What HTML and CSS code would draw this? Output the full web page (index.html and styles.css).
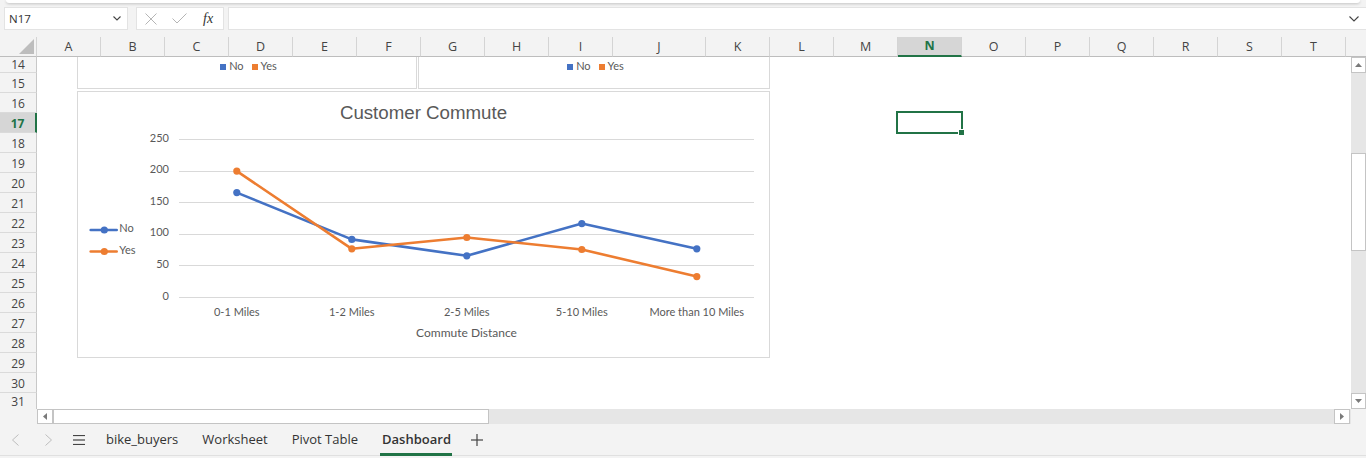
FILE: index.html
```html
<!DOCTYPE html>
<html>
<head>
<meta charset="utf-8">
<title>Dashboard</title>
<link rel="stylesheet" href="styles.css">
</head>
<body>
<div class="top">
  <div class="ribbon-edge"></div>
  <div class="fbar">
    <div class="namebox"><span>N17</span>
      <svg class="chev" width="8" height="5" viewBox="0 0 8 5"><polyline points="0.5,0.5 4,4 7.5,0.5"/></svg>
    </div>
    <div class="fbtns">
      <svg class="ico-x" width="12" height="12" viewBox="0 0 12 12"><line x1="0.5" y1="0.5" x2="11.5" y2="11.5"/><line x1="11.5" y1="0.5" x2="0.5" y2="11.5"/></svg>
      <svg class="ico-ok" width="15" height="11" viewBox="0 0 15 11"><polyline points="0.5,5.5 5,10 14.5,0.5"/></svg>
      <span class="fx">fx</span>
    </div>
    <div class="finput">
      <svg class="chev" width="10" height="6" viewBox="0 0 10 6"><polyline points="0.5,0.5 5,5 9.5,0.5"/></svg>
    </div>
  </div>
</div>

<div class="sheet">
  <div class="corner"><svg width="15" height="15" viewBox="0 0 15 15"><polygon points="15,0 15,15 0,15"/></svg></div>
  <div class="colheads">
    <div class="ch">A</div><div class="ch">B</div><div class="ch">C</div><div class="ch">D</div><div class="ch">E</div><div class="ch">F</div><div class="ch">G</div><div class="ch">H</div><div class="ch">I</div><div class="ch wide">J</div><div class="ch">K</div><div class="ch">L</div><div class="ch">M</div><div class="ch active">N</div><div class="ch">O</div><div class="ch">P</div><div class="ch">Q</div><div class="ch">R</div><div class="ch">S</div><div class="ch">T</div><div class="ch fill"></div>
  </div>

  <div class="rowheads">
    <div class="rh first">14</div><div class="rh">15</div><div class="rh">16</div><div class="rh active">17</div><div class="rh">18</div><div class="rh">19</div><div class="rh">20</div><div class="rh">21</div><div class="rh">22</div><div class="rh">23</div><div class="rh">24</div><div class="rh">25</div><div class="rh">26</div><div class="rh">27</div><div class="rh">28</div><div class="rh">29</div><div class="rh">30</div><div class="rh last">31</div>
  </div>

  <div class="cells">
    <div class="chart mini mini-left">
      <div class="legend">
        <span class="sw no"></span><span class="lt">No</span>
        <span class="sw yes"></span><span class="lt">Yes</span>
      </div>
    </div>
    <div class="chart mini mini-right">
      <div class="legend">
        <span class="sw no"></span><span class="lt">No</span>
        <span class="sw yes"></span><span class="lt">Yes</span>
      </div>
    </div>

    <div class="chart main">
      <svg class="plot" width="691" height="265" viewBox="0 0 691 265">
        <text class="title" x="345.5" y="26.5" text-anchor="middle">Customer Commute</text>
        <g class="grid">
          <line x1="101" x2="676" y1="47.5" y2="47.5"/>
          <line x1="101" x2="676" y1="79.5" y2="79.5"/>
          <line x1="101" x2="676" y1="110.5" y2="110.5"/>
          <line x1="101" x2="676" y1="142.5" y2="142.5"/>
          <line x1="101" x2="676" y1="173.5" y2="173.5"/>
          <line x1="101" x2="676" y1="205.5" y2="205.5"/>
        </g>
        <g class="lab" text-anchor="end">
          <text x="91" y="49.5">250</text>
          <text x="91" y="81">200</text>
          <text x="91" y="112.5">150</text>
          <text x="91" y="144">100</text>
          <text x="91" y="175.5">50</text>
          <text x="91" y="207.5">0</text>
        </g>
        <g class="lab" text-anchor="middle">
          <text x="158.8" y="223.5">0-1 Miles</text>
          <text x="273.8" y="223.5">1-2 Miles</text>
          <text x="388.8" y="223.5">2-5 Miles</text>
          <text x="503.8" y="223.5">5-10 Miles</text>
          <text x="618.8" y="223.5">More than 10 Miles</text>
        </g>
        <text class="axtitle" x="388.5" y="244.5" text-anchor="middle">Commute Distance</text>

        <polyline class="s-no" points="158.8,100.6 273.8,147.4 388.8,163.8 503.8,131.6 618.8,156.8"/>
        <g class="m-no">
          <circle cx="158.8" cy="100.6" r="3.6"/><circle cx="273.8" cy="147.4" r="3.6"/><circle cx="388.8" cy="163.8" r="3.6"/><circle cx="503.8" cy="131.6" r="3.6"/><circle cx="618.8" cy="156.8" r="3.6"/>
        </g>
        <polyline class="s-yes" points="158.8,79.1 273.8,156.8 388.8,145.5 503.8,157.5 618.8,184.6"/>
        <g class="m-yes">
          <circle cx="158.8" cy="79.1" r="3.6"/><circle cx="273.8" cy="156.8" r="3.6"/><circle cx="388.8" cy="145.5" r="3.6"/><circle cx="503.8" cy="157.5" r="3.6"/><circle cx="618.8" cy="184.6" r="3.6"/>
        </g>

        <line class="s-no" x1="12.7" x2="38.7" y1="138" y2="138"/>
        <circle class="m-no" cx="26.3" cy="138" r="3.6"/>
        <text class="lab" x="41.3" y="139.5">No</text>
        <line class="s-yes" x1="12.7" x2="38.7" y1="159.5" y2="159.5"/>
        <circle class="m-yes" cx="26.3" cy="159.5" r="3.6"/>
        <text class="lab" x="41.3" y="161.5">Yes</text>
      </svg>
    </div>

    <div class="selection"><span class="handle"></span></div>
  </div>

  <div class="vscroll">
    <div class="sbtn"><svg width="7" height="4" viewBox="0 0 7 4"><polygon points="3.5,0 7,4 0,4"/></svg></div>
    <div class="vgap"></div>
    <div class="vthumb"></div>
    <div class="vrest"></div>
    <div class="sbtn"><svg width="7" height="4" viewBox="0 0 7 4"><polygon points="0,0 7,0 3.5,4"/></svg></div>
  </div>

  <div class="hcorner"></div>
  <div class="hscroll">
    <div class="sbtn"><svg width="4" height="7" viewBox="0 0 4 7"><polygon points="4,0 4,7 0,3.5"/></svg></div>
    <div class="hthumb"></div>
    <div class="hrest"></div>
    <div class="sbtn"><svg width="4" height="7" viewBox="0 0 4 7"><polygon points="0,0 4,3.5 0,7"/></svg></div>
  </div>
  <div class="hcorner2"></div>
</div>

<div class="tabs">
  <svg class="nav" width="7" height="12" viewBox="0 0 7 12"><polyline points="6.5,0.5 0.5,6 6.5,11.5"/></svg>
  <svg class="nav nav2" width="7" height="12" viewBox="0 0 7 12"><polyline points="0.5,0.5 6.5,6 0.5,11.5"/></svg>
  <svg class="menu" width="12" height="10" viewBox="0 0 12 10"><line x1="0" x2="12" y1="0.5" y2="0.5"/><line x1="0" x2="12" y1="5" y2="5"/><line x1="0" x2="12" y1="9.5" y2="9.5"/></svg>
  <div class="tab first">bike_buyers</div>
  <div class="tab">Worksheet</div>
  <div class="tab">Pivot Table</div>
  <div class="tab active">Dashboard</div>
  <svg class="plus" width="12" height="12" viewBox="0 0 12 12"><line x1="6" x2="6" y1="0" y2="12"/><line x1="0" x2="12" y1="6" y2="6"/></svg>
</div>
</body>
</html>
```

FILE: styles.css
```css
* { box-sizing: border-box; }
html, body { margin: 0; padding: 0; }
body {
  width: 1366px;
  height: 458px;
  overflow: hidden;
  background: #f3f3f3;
  font-family: "Open Sans", "Noto Sans", sans-serif;
  color: #444;
}

/* ---------- top / formula bar ---------- */
.top { height: 37px; display: flex; flex-direction: column; }
.ribbon-edge {
  height: 3px;
  margin: 0 6px;
  background: #fff;
  border-radius: 0 0 7px 7px;
  box-shadow: 0 1px 3px rgba(0,0,0,0.2);
}
.fbar { display: flex; height: 23px; margin-top: 4px; padding-left: 4px; }
.namebox {
  width: 124px;
  background: #fff;
  border: 1px solid #e3e3e3;
  display: flex;
  align-items: center;
  justify-content: space-between;
  padding: 0 6px 0 4px;
  font-size: 11.5px;
  color: #333;
}
.chev polyline { fill: none; stroke: #444; stroke-width: 1.1; }
.fbtns {
  width: 88px;
  margin-left: 8px;
  background: #fff;
  border: 1px solid #e3e3e3;
  display: flex;
  align-items: center;
  padding-left: 8px;
}
.ico-x line, .ico-ok polyline { fill: none; stroke: #b5b5b5; stroke-width: 1; }
.ico-ok { margin-left: 15px; }
.fx {
  margin-left: 16px;
  font-family: "Liberation Serif", "DejaVu Serif", serif;
  font-style: italic;
  font-size: 14px;
  color: #333;
  line-height: 1;
}
.finput {
  flex: 1;
  margin-left: 4px;
  background: #fff;
  border: 1px solid #e3e3e3;
  border-right: none;
  display: flex;
  justify-content: flex-end;
  align-items: center;
  padding-right: 7px;
}

/* ---------- sheet grid ---------- */
.sheet {
  display: grid;
  grid-template-columns: 37px 1314px 15px;
  grid-template-rows: 20px 352px 15px;
}
.corner {
  background: #f3f3f3;
  border-right: 1px solid #d4d4d4;
  border-bottom: 1px solid #bdbdbd;
  padding: 2px 0 0 19px;
}
.corner svg { display: block; }
.corner polygon { fill: #bdbdbd; }

.colheads {
  grid-column: 2 / 4;
  display: flex;
  background: #f3f3f3;
}
.ch {
  flex: none;
  width: 64px;
  height: 20px;
  border-right: 1px solid #d4d4d4;
  border-bottom: 1px solid #bdbdbd;
  text-align: center;
  font-size: 12.5px;
  line-height: 19px;
  color: #444;
}
.ch.wide { width: 93px; }
.ch.fill { flex: 1; border-right: none; }
.ch.active {
  background: #d6d6d6;
  color: #217346;
  font-weight: 700;
  border-bottom: 2px solid #217346;
  line-height: 18px;
}

.rowheads { background: #f3f3f3; overflow: hidden; }
.rh {
  height: 20px;
  border-bottom: 1px solid #dadada;
  border-right: 1px solid #c8c8c8;
  text-align: center;
  font-size: 12px;
  line-height: 19px;
  padding-top: 1px;
  color: #444;
}
.rh.first { height: 16px; line-height: 15px; padding-top: 0; }
.rh.last { height: 16px; line-height: 14px; padding-top: 2px; border-bottom: none; }
.rh.active {
  background: #d6d6d6;
  color: #217346;
  font-weight: 700;
  border-right: 2px solid #217346;
}

/* ---------- cells & charts ---------- */
.cells {
  position: relative;
  overflow: hidden;
  background: #fff;
}
.chart {
  position: absolute;
  background: #fff;
  border: 1px solid #d9d9d9;
}
.mini {
  top: -60px;
  height: 92px;
  display: flex;
  flex-direction: column;
  justify-content: flex-end;
  padding-bottom: 15px;
}
.mini-left { left: 40px; width: 340px; }
.mini-right { left: 381px; width: 352px; }
.legend {
  display: flex;
  justify-content: center;
  align-items: center;
  height: 12px;
  font-family: "Lato", "Liberation Sans", sans-serif;
  font-size: 11px;
  line-height: 12px;
  color: #595959;
}
.lt { position: relative; top: -1px; }
.sw { width: 6px; height: 6px; margin-right: 3px; }
.sw.no { background: #4472c4; }
.sw.yes { background: #ed7d31; margin-left: 8px; }
.mini-left .legend { padding-left: 3px; }
.mini-right .legend { padding-left: 3px; }

.main { left: 40px; top: 34px; width: 693px; height: 267px; }
.plot { display: block; }
.plot .title {
  font-family: "Liberation Sans", Arial, sans-serif;
  font-size: 18.7px;
  fill: #595959;
}
.plot .grid line { stroke: #d9d9d9; stroke-width: 1; }
.plot .lab, .plot .lab text {
  font-family: "Lato", "Liberation Sans", sans-serif;
  font-size: 11px;
  fill: #595959;
}
.plot .axtitle {
  font-family: "Lato", "Liberation Sans", sans-serif;
  font-size: 12px;
  fill: #595959;
}
.s-no { fill: none; stroke: #4472c4; stroke-width: 2.6; stroke-linejoin: round; stroke-linecap: round; }
.s-yes { fill: none; stroke: #ed7d31; stroke-width: 2.6; stroke-linejoin: round; stroke-linecap: round; }
.m-no, .m-no circle { fill: #4472c4; }
.m-yes, .m-yes circle { fill: #ed7d31; }

.selection {
  position: absolute;
  left: 859px;
  top: 54px;
  width: 67px;
  height: 23px;
  border: 2px solid #217346;
}
.handle {
  position: absolute;
  right: -4px;
  bottom: -4px;
  width: 7px;
  height: 7px;
  background: #217346;
  border: 1px solid #fff;
}

/* ---------- scrollbars ---------- */
.sbtn {
  flex: none;
  width: 16px;
  height: 16px;
  background: #fff;
  border: 1px solid #c4c4c4;
  display: flex;
  align-items: center;
  justify-content: center;
}
.sbtn svg { display: block; }
.sbtn polygon { fill: #7a7a7a; }

.vscroll {
  background: #e6e6e6;
  display: flex;
  flex-direction: column;
}
.vscroll .sbtn { width: 15px; }
.vgap { height: 80px; }
.vthumb { height: 98px; background: #fff; border: 1px solid #c4c4c4; }
.vrest { flex: 1; }

.hcorner { background: #f3f3f3; }
.hcorner2 { background: #f3f3f3; }
.hscroll {
  background: #e6e6e6;
  display: flex;
  padding-right: 1px;
}
.hscroll .sbtn { height: 15px; }
.hthumb { width: 436px; background: #fff; border: 1px solid #c4c4c4; }
.hrest { flex: 1; }

/* ---------- sheet tabs ---------- */
.tabs {
  height: 32px;
  display: flex;
  align-items: center;
  padding-left: 12px;
  border-bottom: 1px solid #e0e0e0;
  font-size: 13px;
  color: #333;
}
.nav polyline { fill: none; stroke: #bdbdbd; stroke-width: 1; }
.nav2 { margin-left: 26px; }
.menu { margin-left: 21px; }
.menu line, .plus line { stroke: #444; stroke-width: 1.2; }
.tab {
  position: relative;
  height: 32px;
  line-height: 31px;
  padding: 0 12px;
}
.tab.first { margin-left: 9px; }
.tab.active { font-weight: 600; color: #333; }
.tab.active::after {
  content: "";
  position: absolute;
  left: 10px;
  right: 11px;
  bottom: 0;
  height: 3px;
  background: #217346;
}
.plus { margin-left: 8px; }
```
